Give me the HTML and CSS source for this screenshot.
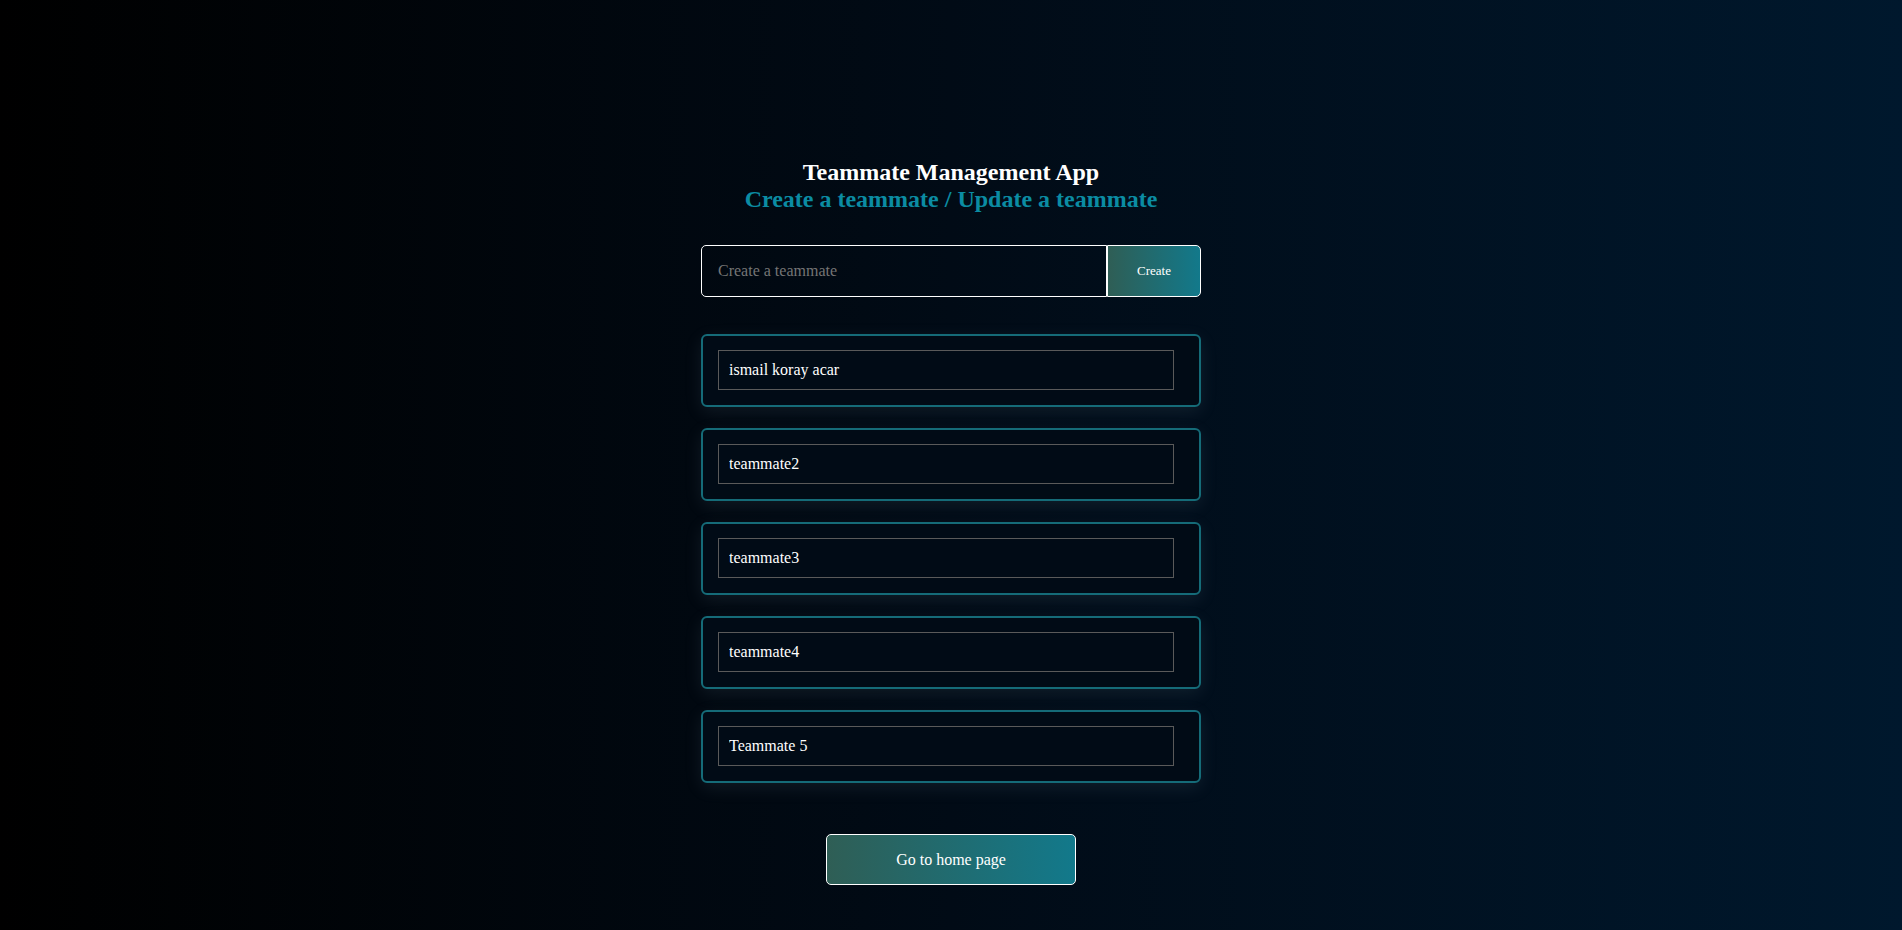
FILE: index.html
```html
<!DOCTYPE html>
<html lang="en">
<head>
<meta charset="utf-8">
<title>Teammate Management App</title>
<link rel="stylesheet" href="styles.css">
</head>
<body>
<main class="page">
  <h2 class="heading">
    <span class="heading-title">Teammate Management App</span>
    <span class="heading-sub">Create a teammate / Update a teammate</span>
  </h2>
  <form class="create-row">
    <input class="create-input" type="text" placeholder="Create a teammate">
    <button class="create-btn" type="button">Create</button>
  </form>
  <ul class="list">
    <li class="card"><input class="card-input" type="text" value="ismail koray acar"></li>
    <li class="card"><input class="card-input" type="text" value="teammate2"></li>
    <li class="card"><input class="card-input" type="text" value="teammate3"></li>
    <li class="card"><input class="card-input" type="text" value="teammate4"></li>
    <li class="card"><input class="card-input" type="text" value="Teammate 5"></li>
  </ul>
  <button class="home-btn" type="button">Go to home page</button>
</main>
</body>
</html>
```

FILE: styles.css
```css
* { box-sizing: border-box; }

html, body {
  margin: 0;
  padding: 0;
}

body {
  min-height: 100vh;
  background: linear-gradient(to right, #000000 0%, #010b16 50%, #00182d 100%);
  font-family: "Liberation Serif", "Times New Roman", serif;
  color: #fff;
}

.page {
  display: flex;
  flex-direction: column;
  align-items: center;
  padding-top: 159px;
  padding-bottom: 40px;
}

.heading {
  margin: 0;
  display: flex;
  flex-direction: column;
  align-items: center;
  font-size: 24px;
  font-weight: bold;
  line-height: 27px;
}

.heading-title { color: #ffffff; }
.heading-sub { color: #0b8ca3; }

.create-row {
  margin: 32px 0 0;
  width: 500px;
  height: 52px;
  display: flex;
}

.create-input {
  flex: 0 0 406px;
  height: 100%;
  background: transparent;
  border: 1px solid #ffffff;
  border-radius: 5px 0 0 5px;
  padding: 0 16px;
  font-family: inherit;
  font-size: 16px;
  color: #fff;
  outline: none;
}

.create-input::placeholder { color: #757575; }

.create-btn {
  flex: 1;
  height: 100%;
  border: 1px solid #ffffff;
  border-radius: 0 5px 5px 0;
  background: linear-gradient(to right, #2f5e55, #12798b);
  color: #fff;
  font-family: inherit;
  font-size: 13px;
}

.list {
  list-style: none;
  margin: 37px 0 0;
  padding: 0;
  width: 500px;
  display: flex;
  flex-direction: column;
  gap: 21px;
}

.card {
  height: 73px;
  border: 2px solid #156b78;
  border-radius: 6px;
  padding: 14px 15px 15px;
  background: #010b16;
  box-shadow: 0 5px 18px rgba(160, 190, 210, 0.10);
}

.card-input {
  display: block;
  width: 456px;
  height: 40px;
  background: transparent;
  border: 1px solid #5a5a5a;
  padding: 0 10px;
  font-family: inherit;
  font-size: 16px;
  color: #fff;
  outline: none;
}

.home-btn {
  margin-top: 51px;
  width: 250px;
  height: 51px;
  border: 1px solid #ffffff;
  border-radius: 5px;
  background: linear-gradient(to right, #2f5e55, #12798b);
  color: #fff;
  font-family: inherit;
  font-size: 16px;
}
```
